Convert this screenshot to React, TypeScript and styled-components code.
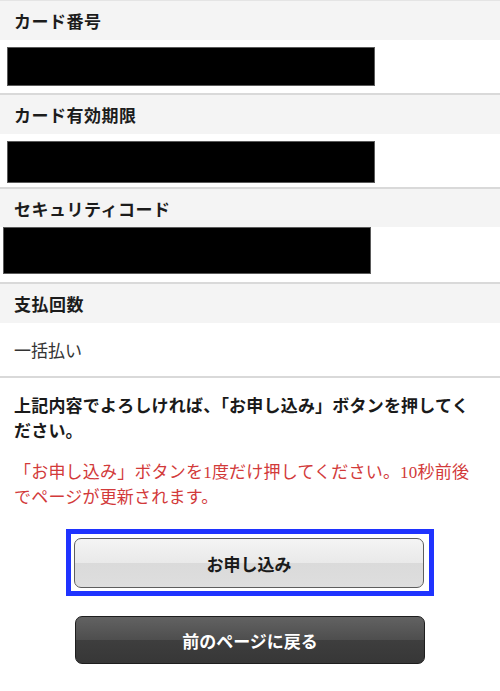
import React from 'react';
import styled, { createGlobalStyle } from 'styled-components';

type Field = {
  label: string;
  value?: string;
  mask?: { width: number; height: number; left: number; top: number; bottom: number };
};

const fields: Field[] = [
  { label: 'カード番号', mask: { width: 368, height: 39, left: 7, top: 7, bottom: 7 } },
  { label: 'カード有効期限', mask: { width: 368, height: 42, left: 7, top: 7, bottom: 4 } },
  { label: 'セキュリティコード', mask: { width: 368, height: 47, left: 3, top: 0, bottom: 8 } },
  { label: '支払回数', value: '一括払い' },
];

const GlobalStyle = createGlobalStyle`
  html, body {
    margin: 0;
    padding: 0;
    background: #ffffff;
  }
  body {
    font-family: "Liberation Serif", "Noto Sans CJK JP", serif;
    color: #1a1a1a;
  }
`;

const Page = styled.div`
  width: 500px;
  border-top: 1px solid #e4e4e4;
`;

const Section = styled.section`
  border-bottom: 2px solid #d9d9d9;
`;

const Label = styled.h3<{ $short?: boolean }>`
  margin: 0;
  height: ${({ $short }) => ($short ? 38 : 39)}px;
  padding-left: 14px;
  display: flex;
  align-items: center;
  background: #f4f4f4;
  font-size: 17px;
  font-weight: 700;
  letter-spacing: 0.5px;
  color: #1c1c1c;
`;

const MaskBody = styled.div`
  background: #ffffff;
`;

const Mask = styled.div`
  background: #000000;
  border: 1px solid #5a5a5a;
  box-sizing: border-box;
`;

const ValueBody = styled.div`
  height: 53px;
  padding-left: 14px;
  display: flex;
  align-items: center;
  font-size: 17px;
  color: #333333;
`;

const Notes = styled.div`
  padding: 16px 14px 0;
`;

const Note = styled.p<{ $alert?: boolean }>`
  margin: 0 0 16px;
  font-size: 17px;
  line-height: 25px;
  letter-spacing: 0.2px;
  font-weight: ${({ $alert }) => ($alert ? 400 : 700)};
  color: ${({ $alert }) => ($alert ? '#d23a3a' : '#1a1a1a')};
`;

const Actions = styled.div`
  display: flex;
  flex-direction: column;
  align-items: center;
  gap: 20px;
  padding-top: 3px;
`;

const FocusRing = styled.div`
  display: flex;
  padding: 4px 5px 3px 3px;
  border: 5px solid #1f33ff;
`;

const Button = styled.button<{ $dark?: boolean }>`
  width: 350px;
  height: ${({ $dark }) => ($dark ? 48 : 50)}px;
  border-radius: 7px;
  font-family: "Noto Sans CJK JP", sans-serif;
  font-size: 17px;
  font-weight: 700;
  cursor: pointer;
  border: 1.5px solid ${({ $dark }) => ($dark ? '#1e1e1e' : '#5e5e5e')};
  color: ${({ $dark }) => ($dark ? '#ffffff' : '#1a1a1a')};
  background: ${({ $dark }) =>
    $dark
      ? 'linear-gradient(to bottom, #626262 0%, #4e4e4e 50%, #3e3e3e 50%, #373737 100%)'
      : 'linear-gradient(to bottom, #f4f4f4 0%, #e9e9e9 50%, #dadada 50%, #dedede 100%)'};
  outline: none;
`;

export default function App() {
  return (
    <>
      <GlobalStyle />
      <Page>
        {fields.map((f) => (
          <Section key={f.label}>
            <Label $short={f.mask?.top === 0}>{f.label}</Label>
            {f.mask ? (
              <MaskBody
                style={{
                  padding: `${f.mask.top}px 0 ${f.mask.bottom}px ${f.mask.left}px`,
                }}
              >
                <Mask style={{ width: f.mask.width, height: f.mask.height }} />
              </MaskBody>
            ) : (
              <ValueBody>{f.value}</ValueBody>
            )}
          </Section>
        ))}
        <Notes>
          <Note>上記内容でよろしければ、「お申し込み」ボタンを押してください。</Note>
          <Note $alert>
            「お申し込み」ボタンを1度だけ押してください。10秒前後でページが更新されます。
          </Note>
        </Notes>
        <Actions>
          <FocusRing>
            <Button type="button">お申し込み</Button>
          </FocusRing>
          <Button type="button" $dark>
            前のページに戻る
          </Button>
        </Actions>
      </Page>
    </>
  );
}
